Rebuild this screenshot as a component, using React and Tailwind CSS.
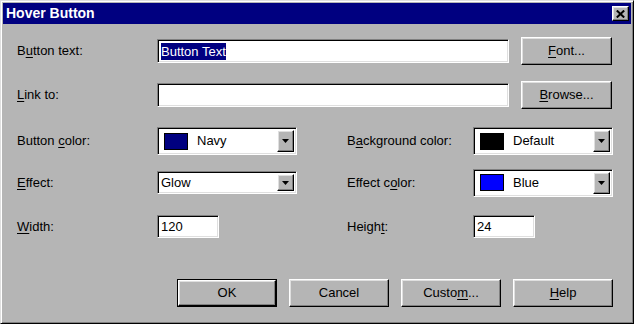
import React from "react";

const raised =
  "border border-t-white border-l-white border-b-black border-r-black shadow-[inset_-1px_-1px_0_#808080,inset_1px_1px_0_#dfdfdf]";
const sunken =
  "border border-t-[#808080] border-l-[#808080] border-b-white border-r-white shadow-[inset_1px_1px_0_#000,inset_-1px_-1px_0_#dfdfdf]";

const U = ({ children }) => <span className="underline underline-offset-[2px]">{children}</span>;

const Button = ({ children, w = "w-[91px]", isDefault }) => {
  const inner = (
    <div className={`${raised} h-full w-full bg-[#b5b5b5] flex items-center justify-center`}>
      {children}
    </div>
  );
  if (isDefault) {
    return <div className={`${w} h-[28px] border border-black`}>{inner}</div>;
  }
  return <div className={`${w} h-[28px]`}>{inner}</div>;
};

const Arrow = () => (
  <div className={`${raised} w-[17px] h-full bg-[#b5b5b5] flex items-center justify-center`}>
    <svg width="7" height="4" viewBox="0 0 7 4">
      <path d="M0 0h7L3.5 4z" fill="#000" />
    </svg>
  </div>
);

const ColorCombo = ({ color, label }) => (
  <div className={`${sunken} w-[140px] h-[28px] bg-white flex items-stretch p-[2px]`}>
    <div className="flex-1 flex items-center pl-[4px]">
      <div className="w-[24px] h-[17px] border border-black" style={{ backgroundColor: color }} />
      <span className="ml-[9px]">{label}</span>
    </div>
    <Arrow />
  </div>
);

const Label = ({ children, w = "w-[140px]" }) => <div className={`${w} shrink-0`}>{children}</div>;

export default function App() {
  return (
    <div
      className="w-[634px] h-[324px] bg-[#b5b5b5] p-[2px] border border-t-[#dfdfdf] border-l-[#dfdfdf] border-b-black border-r-black shadow-[inset_1px_1px_0_#fff,inset_-1px_-1px_0_#808080] text-[13px] text-black flex flex-col"
      style={{ fontFamily: '"Liberation Sans", Arial, sans-serif' }}
    >
      <div className="h-[21px] bg-[#000080] flex items-center justify-between pl-[3px] pr-[2px]">
        <span className="text-white font-bold text-[14px]">Hover Button</span>
        <div className={`${raised} w-[17px] h-[15px] bg-[#b5b5b5] flex items-center justify-center`}>
          <svg width="9" height="8" viewBox="0 0 9 8">
            <path d="M0.8 0.5L8.2 7.5M8.2 0.5L0.8 7.5" stroke="#000" strokeWidth="2" />
          </svg>
        </div>
      </div>

      <div className="flex flex-col pl-[14px]">
        <div className="flex items-center h-[28px] mt-[13px]">
          <Label>
            B<U>u</U>tton text:
          </Label>
          <div className={`${sunken} w-[352px] h-[24px] bg-white flex items-center pl-[3px]`}>
            <span className="bg-[#000080] text-white leading-[17px]">Button Text</span>
          </div>
          <div className="ml-[12px]">
            <Button>
              <U>F</U>ont...
            </Button>
          </div>
        </div>

        <div className="flex items-center h-[28px] mt-[16px]">
          <Label>
            <U>L</U>ink to:
          </Label>
          <div className={`${sunken} w-[352px] h-[24px] bg-white`} />
          <div className="ml-[12px]">
            <Button>
              <U>B</U>rowse...
            </Button>
          </div>
        </div>

        <div className="flex items-center h-[28px] mt-[18px]">
          <Label>
            Button <U>c</U>olor:
          </Label>
          <ColorCombo color="#000080" label="Navy" />
          <div className="ml-[50px]">
            <Label w="w-[126px]">
              B<U>a</U>ckground color:
            </Label>
          </div>
          <ColorCombo color="#000000" label="Default" />
        </div>

        <div className="flex items-center h-[23px] mt-[16px]">
          <Label>
            <U>E</U>ffect:
          </Label>
          <div className={`${sunken} w-[140px] h-[23px] bg-white flex items-stretch p-[2px]`}>
            <div className="flex-1 flex items-center pl-[1px]">Glow</div>
            <Arrow />
          </div>
          <div className="ml-[50px]">
            <Label w="w-[126px]">
              Effect c<U>o</U>lor:
            </Label>
          </div>
          <ColorCombo color="#0000ff" label="Blue" />
        </div>

        <div className="flex items-center h-[23px] mt-[21px]">
          <Label>
            <U>W</U>idth:
          </Label>
          <div className={`${sunken} w-[62px] h-[23px] bg-white flex items-center pl-[3px]`}>120</div>
          <div className="ml-[128px]">
            <Label w="w-[126px]">
              Heigh<U>t</U>:
            </Label>
          </div>
          <div className={`${sunken} w-[62px] h-[23px] bg-white flex items-center pl-[3px]`}>24</div>
        </div>

        <div className="flex items-center gap-[12px] mt-[41px] ml-[160px]">
          <Button w="w-[100px]" isDefault>
            OK
          </Button>
          <Button w="w-[100px]">Cancel</Button>
          <Button w="w-[100px]">
            Custo<U>m</U>...
          </Button>
          <Button w="w-[100px]">
            <U>H</U>elp
          </Button>
        </div>
      </div>
    </div>
  );
}
